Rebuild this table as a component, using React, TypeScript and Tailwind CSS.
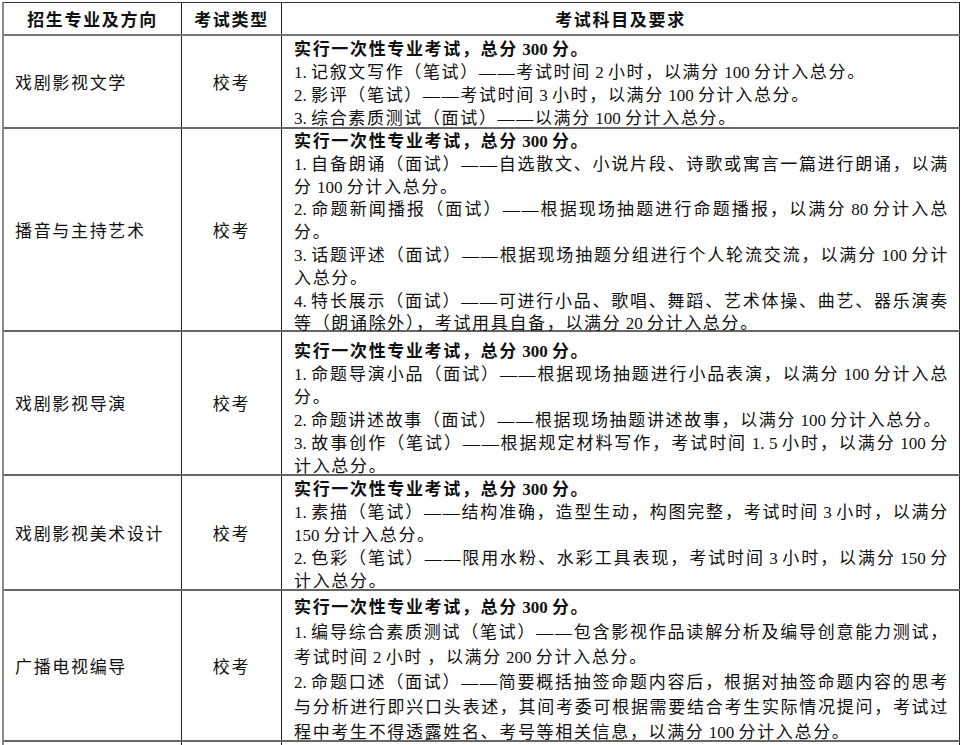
import type { ReactNode } from "react"

const rows = [
    {
        name: "戏剧影视文学",
        type: "校考",
        height: "h-[93px]",
        pad: "pt-0",
        leading: "leading-[23px]",
        items: [
            ["1. 记叙文写作（笔试）——考试时间 2 小时，以满分 100 分计入总分。"],
            ["2. 影评（笔试）——考试时间 3 小时，以满分 100 分计入总分。"],
            ["3. 综合素质测试（面试）——以满分 100 分计入总分。"],
        ],
    },
    {
        name: "播音与主持艺术",
        type: "校考",
        height: "h-[203px]",
        pad: "pt-0",
        leading: "leading-[22.8px]",
        items: [
            ["1. 自备朗诵（面试）——自选散文、小说片段、诗歌或寓言一篇进行朗诵，以满", "分 100 分计入总分。"],
            ["2. 命题新闻播报（面试）——根据现场抽题进行命题播报，以满分 80 分计入总", "分。"],
            ["3. 话题评述（面试）——根据现场抽题分组进行个人轮流交流，以满分 100 分计", "入总分。"],
            ["4. 特长展示（面试）——可进行小品、歌唱、舞蹈、艺术体操、曲艺、器乐演奏", "等（朗诵除外），考试用具自备，以满分 20 分计入总分。"],
        ],
    },
    {
        name: "戏剧影视导演",
        type: "校考",
        height: "h-[144px]",
        pad: "pt-[6px]",
        leading: "leading-[23px]",
        items: [
            ["1. 命题导演小品（面试）——根据现场抽题进行小品表演，以满分 100 分计入总", "分。"],
            ["2. 命题讲述故事（面试）——根据现场抽题讲述故事，以满分 100 分计入总分。"],
            ["3. 故事创作（笔试）——根据规定材料写作，考试时间 1. 5 小时，以满分 100 分", "计入总分。"],
        ],
    },
    {
        name: "戏剧影视美术设计",
        type: "校考",
        height: "h-[115px]",
        pad: "pt-0",
        leading: "leading-[23px]",
        items: [
            ["1. 素描（笔试）——结构准确，造型生动，构图完整，考试时间 3 小时，以满分", "150 分计入总分。"],
            ["2. 色彩（笔试）——限用水粉、水彩工具表现，考试时间 3 小时，以满分 150 分", "计入总分。"],
        ],
    },
    {
        name: "广播电视编导",
        type: "校考",
        height: "h-[151px]",
        pad: "pt-[2px]",
        leading: "leading-[25px]",
        items: [
            ["1. 编导综合素质测试（笔试）——包含影视作品读解分析及编导创意能力测试，", "考试时间 2 小时 ，以满分 200 分计入总分。"],
            [
                "2. 命题口述（面试）——简要概括抽签命题内容后，根据对抽签命题内容的思考",
                "与分析进行即兴口头表述，其间考委可根据需要结合考生实际情况提问，考试过",
                "程中考生不得透露姓名、考号等相关信息，以满分 100 分计入总分。",
            ],
        ],
    },
]

// latin runs (numbers, "1. ") get Times-like glyphs and no extra spacing;
// dashes use the serif em dash, which is a full em wide
function Mixed({ text }: { text: string }) {
    const parts: ReactNode[] = text.split(/([\x20-\x7e]+|—+)/).map((part, i) => {
        if (/^[\x20-\x7e]+$/.test(part))
            return (
                <span key={i} className="font-['Liberation_Serif',serif] leading-none tracking-normal">
                    {part}
                </span>
            )
        if (/^—+$/.test(part))
            return (
                <span key={i} className="font-['Liberation_Serif',serif] leading-none">
                    {part}
                </span>
            )
        return part
    })
    return <>{parts}</>
}

export default function App() {
    return (
        <div className="min-h-screen bg-white text-[#111] font-['Noto_Sans_CJK_SC',sans-serif] text-[17px] tracking-[1.66px]">
            <div className="ml-[2px] mt-[2px] w-[958px] border-l-2 border-t border-l-[#8a8a8a] border-t-[#333]">
                {/* Header */}
                <div className="flex h-[33px] border-b-2 border-[#777]">
                    <div className="flex w-[178px] items-center justify-center border-r border-[#222] font-bold">招生专业及方向</div>
                    <div className="flex w-[100px] items-center justify-center border-r border-[#222] font-bold">考试类型</div>
                    <div className="flex w-[678px] items-center justify-center border-r border-[#222] font-bold">考试科目及要求</div>
                </div>

                {/* Rows */}
                {rows.map((row) => (
                    <div key={row.name} className={`flex border-b-2 border-[#666] ${row.height}`}>
                        <div className="flex w-[178px] items-center border-r border-[#222] pl-[11px]">{row.name}</div>
                        <div className="flex w-[100px] items-center justify-center border-r border-[#222]">{row.type}</div>
                        <div className={`w-[678px] border-r border-[#222] pl-3 pr-[10px] ${row.pad} ${row.leading}`}>
                            <div className="whitespace-nowrap font-bold">
                                <Mixed text="实行一次性专业考试，总分 300 分。" />
                            </div>
                            {row.items.map((lines, i) => (
                                <div key={i}>
                                    {lines.map((line, j) => (
                                        <div
                                            key={j}
                                            className={j < lines.length - 1 ? "whitespace-nowrap text-justify [text-align-last:justify]" : "whitespace-nowrap"}
                                        >
                                            <Mixed text={line} />
                                        </div>
                                    ))}
                                </div>
                            ))}
                        </div>
                    </div>
                ))}

                {/* next row, cut off by the window */}
                <div className="flex h-[40px]">
                    <div className="w-[178px] border-r border-[#222]" />
                    <div className="w-[100px] border-r border-[#222]" />
                    <div className="w-[678px] border-r border-[#222]" />
                </div>
            </div>
        </div>
    )
}
